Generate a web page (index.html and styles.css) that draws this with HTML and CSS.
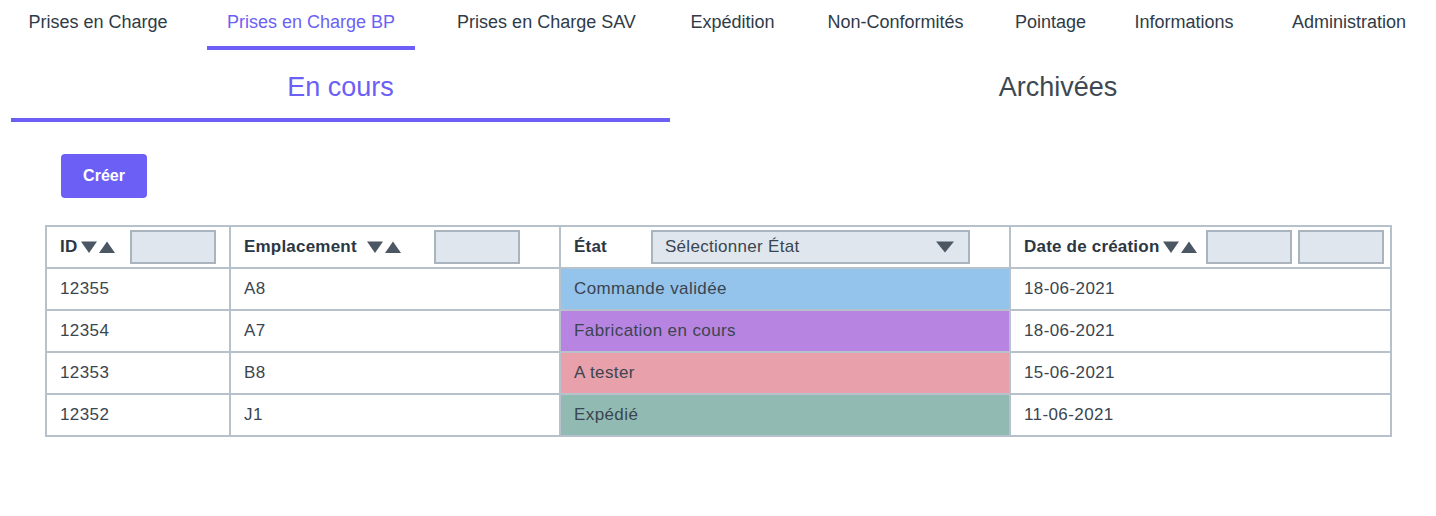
FILE: index.html
```html
<!DOCTYPE html>
<html lang="fr">
<head>
<meta charset="utf-8">
<title>Prises en Charge BP</title>
<link rel="stylesheet" href="styles.css">
</head>
<body>
<nav class="main-nav">
  <a class="nav-tab">Prises en Charge</a>
  <a class="nav-tab active">Prises en Charge BP</a>
  <a class="nav-tab">Prises en Charge SAV</a>
  <a class="nav-tab">Expédition</a>
  <a class="nav-tab">Non-Conformités</a>
  <a class="nav-tab">Pointage</a>
  <a class="nav-tab">Informations</a>
  <a class="nav-tab">Administration</a>
</nav>
<div class="sub-tabs">
  <a class="sub-tab sub-left active">En cours</a>
  <a class="sub-tab sub-right">Archivées</a>
</div>
<div class="actions">
  <button class="btn-create">Créer</button>
</div>
<table class="grid">
  <colgroup>
    <col class="c-id"><col class="c-emp"><col class="c-etat"><col class="c-date">
  </colgroup>
  <thead>
    <tr>
      <th>
        <div class="th-inner">
          <span class="th-label">ID</span>
          <svg class="sort" width="34" height="14" viewBox="0 0 34 14"><polygon points="0,1.5 16,1.5 8,13"/><polygon points="18,13 34,13 26,1.5"/></svg>
          <span class="filter f-id"></span>
        </div>
      </th>
      <th>
        <div class="th-inner">
          <span class="th-label">Emplacement</span>
          <svg class="sort s-emp" width="34" height="14" viewBox="0 0 34 14"><polygon points="0,1.5 16,1.5 8,13"/><polygon points="18,13 34,13 26,1.5"/></svg>
          <span class="filter f-emp"></span>
        </div>
      </th>
      <th>
        <div class="th-inner">
          <span class="th-label">État</span>
          <span class="select">
            <span class="select-text">Sélectionner État</span>
            <svg class="select-arrow" width="18" height="12" viewBox="0 0 18 12"><polygon points="0,0.5 18,0.5 9,11.5"/></svg>
          </span>
        </div>
      </th>
      <th>
        <div class="th-inner">
          <span class="th-label">Date de création</span>
          <svg class="sort s-date" width="34" height="14" viewBox="0 0 34 14"><polygon points="0,1.5 16,1.5 8,13"/><polygon points="18,13 34,13 26,1.5"/></svg>
          <span class="filter f-date1"></span>
          <span class="filter f-date2"></span>
        </div>
      </th>
    </tr>
  </thead>
  <tbody>
    <tr><td>12355</td><td>A8</td><td class="st st-valid">Commande validée</td><td>18-06-2021</td></tr>
    <tr><td>12354</td><td>A7</td><td class="st st-fab">Fabrication en cours</td><td>18-06-2021</td></tr>
    <tr><td>12353</td><td>B8</td><td class="st st-test">A tester</td><td>15-06-2021</td></tr>
    <tr><td>12352</td><td>J1</td><td class="st st-exp">Expédié</td><td>11-06-2021</td></tr>
  </tbody>
</table>
</body>
</html>
```
FILE: styles.css
```css
* { box-sizing: border-box; }
body {
  margin: 0;
  font-family: "Liberation Sans", Arial, sans-serif;
  color: #2f3b47;
  background: #fff;
}
.main-nav {
  display: flex;
  height: 50px;
}
.nav-tab {
  display: block;
  height: 50px;
  padding-top: 12px;
  font-size: 18px;
  line-height: 20px;
  text-align: center;
  color: #2f3b47;
  border-bottom: 4px solid transparent;
  white-space: nowrap;
  flex: none;
}
.nav-tab:nth-child(1) { width: 180px; margin-left: 8px; }
.nav-tab:nth-child(2) { width: 208px; margin-left: 19px; }
.nav-tab:nth-child(3) { width: 217px; margin-left: 23px; }
.nav-tab:nth-child(4) { width: 127px; margin-left: 14px; }
.nav-tab:nth-child(5) { width: 181px; margin-left: 9px; }
.nav-tab:nth-child(6) { width: 113px; margin-left: 8px; }
.nav-tab:nth-child(7) { width: 146px; margin-left: 4px; }
.nav-tab:nth-child(8) { width: 162px; margin-left: 11px; }
.nav-tab.active {
  color: #6c5ff5;
  border-bottom-color: #6c5ff5;
}
.sub-tabs {
  display: flex;
  padding-left: 11px;
}
.sub-tab {
  display: block;
  height: 72px;
  padding-top: 21px;
  font-size: 27px;
  line-height: 32px;
  text-align: center;
  color: #3d4852;
  border-bottom: 4px solid transparent;
}
.sub-left { width: 659px; }
.sub-right { flex: 1; margin-left: 10px; }
.sub-tab.active {
  color: #6c5ff5;
  border-bottom-color: #6c5ff5;
}
.actions {
  padding: 32px 0 0 61px;
}
.btn-create {
  width: 86px;
  height: 44px;
  border: none;
  border-radius: 4px;
  background: #6c5ff5;
  color: #fff;
  font-family: "Liberation Sans", Arial, sans-serif;
  font-weight: bold;
  font-size: 16px;
  padding: 0;
}
.grid {
  margin: 27px 0 0 45px;
  border-collapse: collapse;
  width: 1345px;
  table-layout: fixed;
  font-size: 17px;
  letter-spacing: 0.4px;
}
.c-id { width: 184px; }
.c-emp { width: 330px; }
.c-etat { width: 450px; }
.c-date { width: 381px; }
.grid th, .grid td {
  border: 2px solid #b7c1cc;
  height: 42px;
  padding: 0 0 0 13px;
  text-align: left;
  vertical-align: middle;
}
.grid td { color: #3a4550; }
.grid th { color: #2b3743; }
.th-inner {
  display: flex;
  align-items: center;
}
.th-label {
  font-weight: bold;
  font-size: 17px;
  letter-spacing: 0.2px;
}
.sort {
  fill: #4b5763;
  margin-left: 4px;
  flex: none;
}
.s-emp { margin-left: 10px; }
.s-date { margin-left: 4px; }
.filter {
  display: block;
  width: 86px;
  height: 34px;
  background: #dfe6ee;
  border: 2px solid #a9b4bf;
  flex: none;
}
.f-id { margin-left: 15px; }
.f-emp { margin-left: 33px; }
.f-date1 { margin-left: 9px; }
.f-date2 { margin-left: 6px; }
.select {
  display: flex;
  align-items: center;
  justify-content: space-between;
  margin-left: 44px;
  width: 319px;
  height: 34px;
  background: #dfe6ee;
  border: 2px solid #a9b4bf;
  padding: 0 14px 0 12px;
}
.select-text {
  font-weight: normal;
  font-size: 17px;
  letter-spacing: 0.3px;
  color: #3a4550;
}
.select-arrow { fill: #4b5763; }
.st-valid { background: #94c3eb; }
.st-fab { background: #b884e1; }
.st-test { background: #e8a0aa; }
.st-exp { background: #90bab2; }
```
